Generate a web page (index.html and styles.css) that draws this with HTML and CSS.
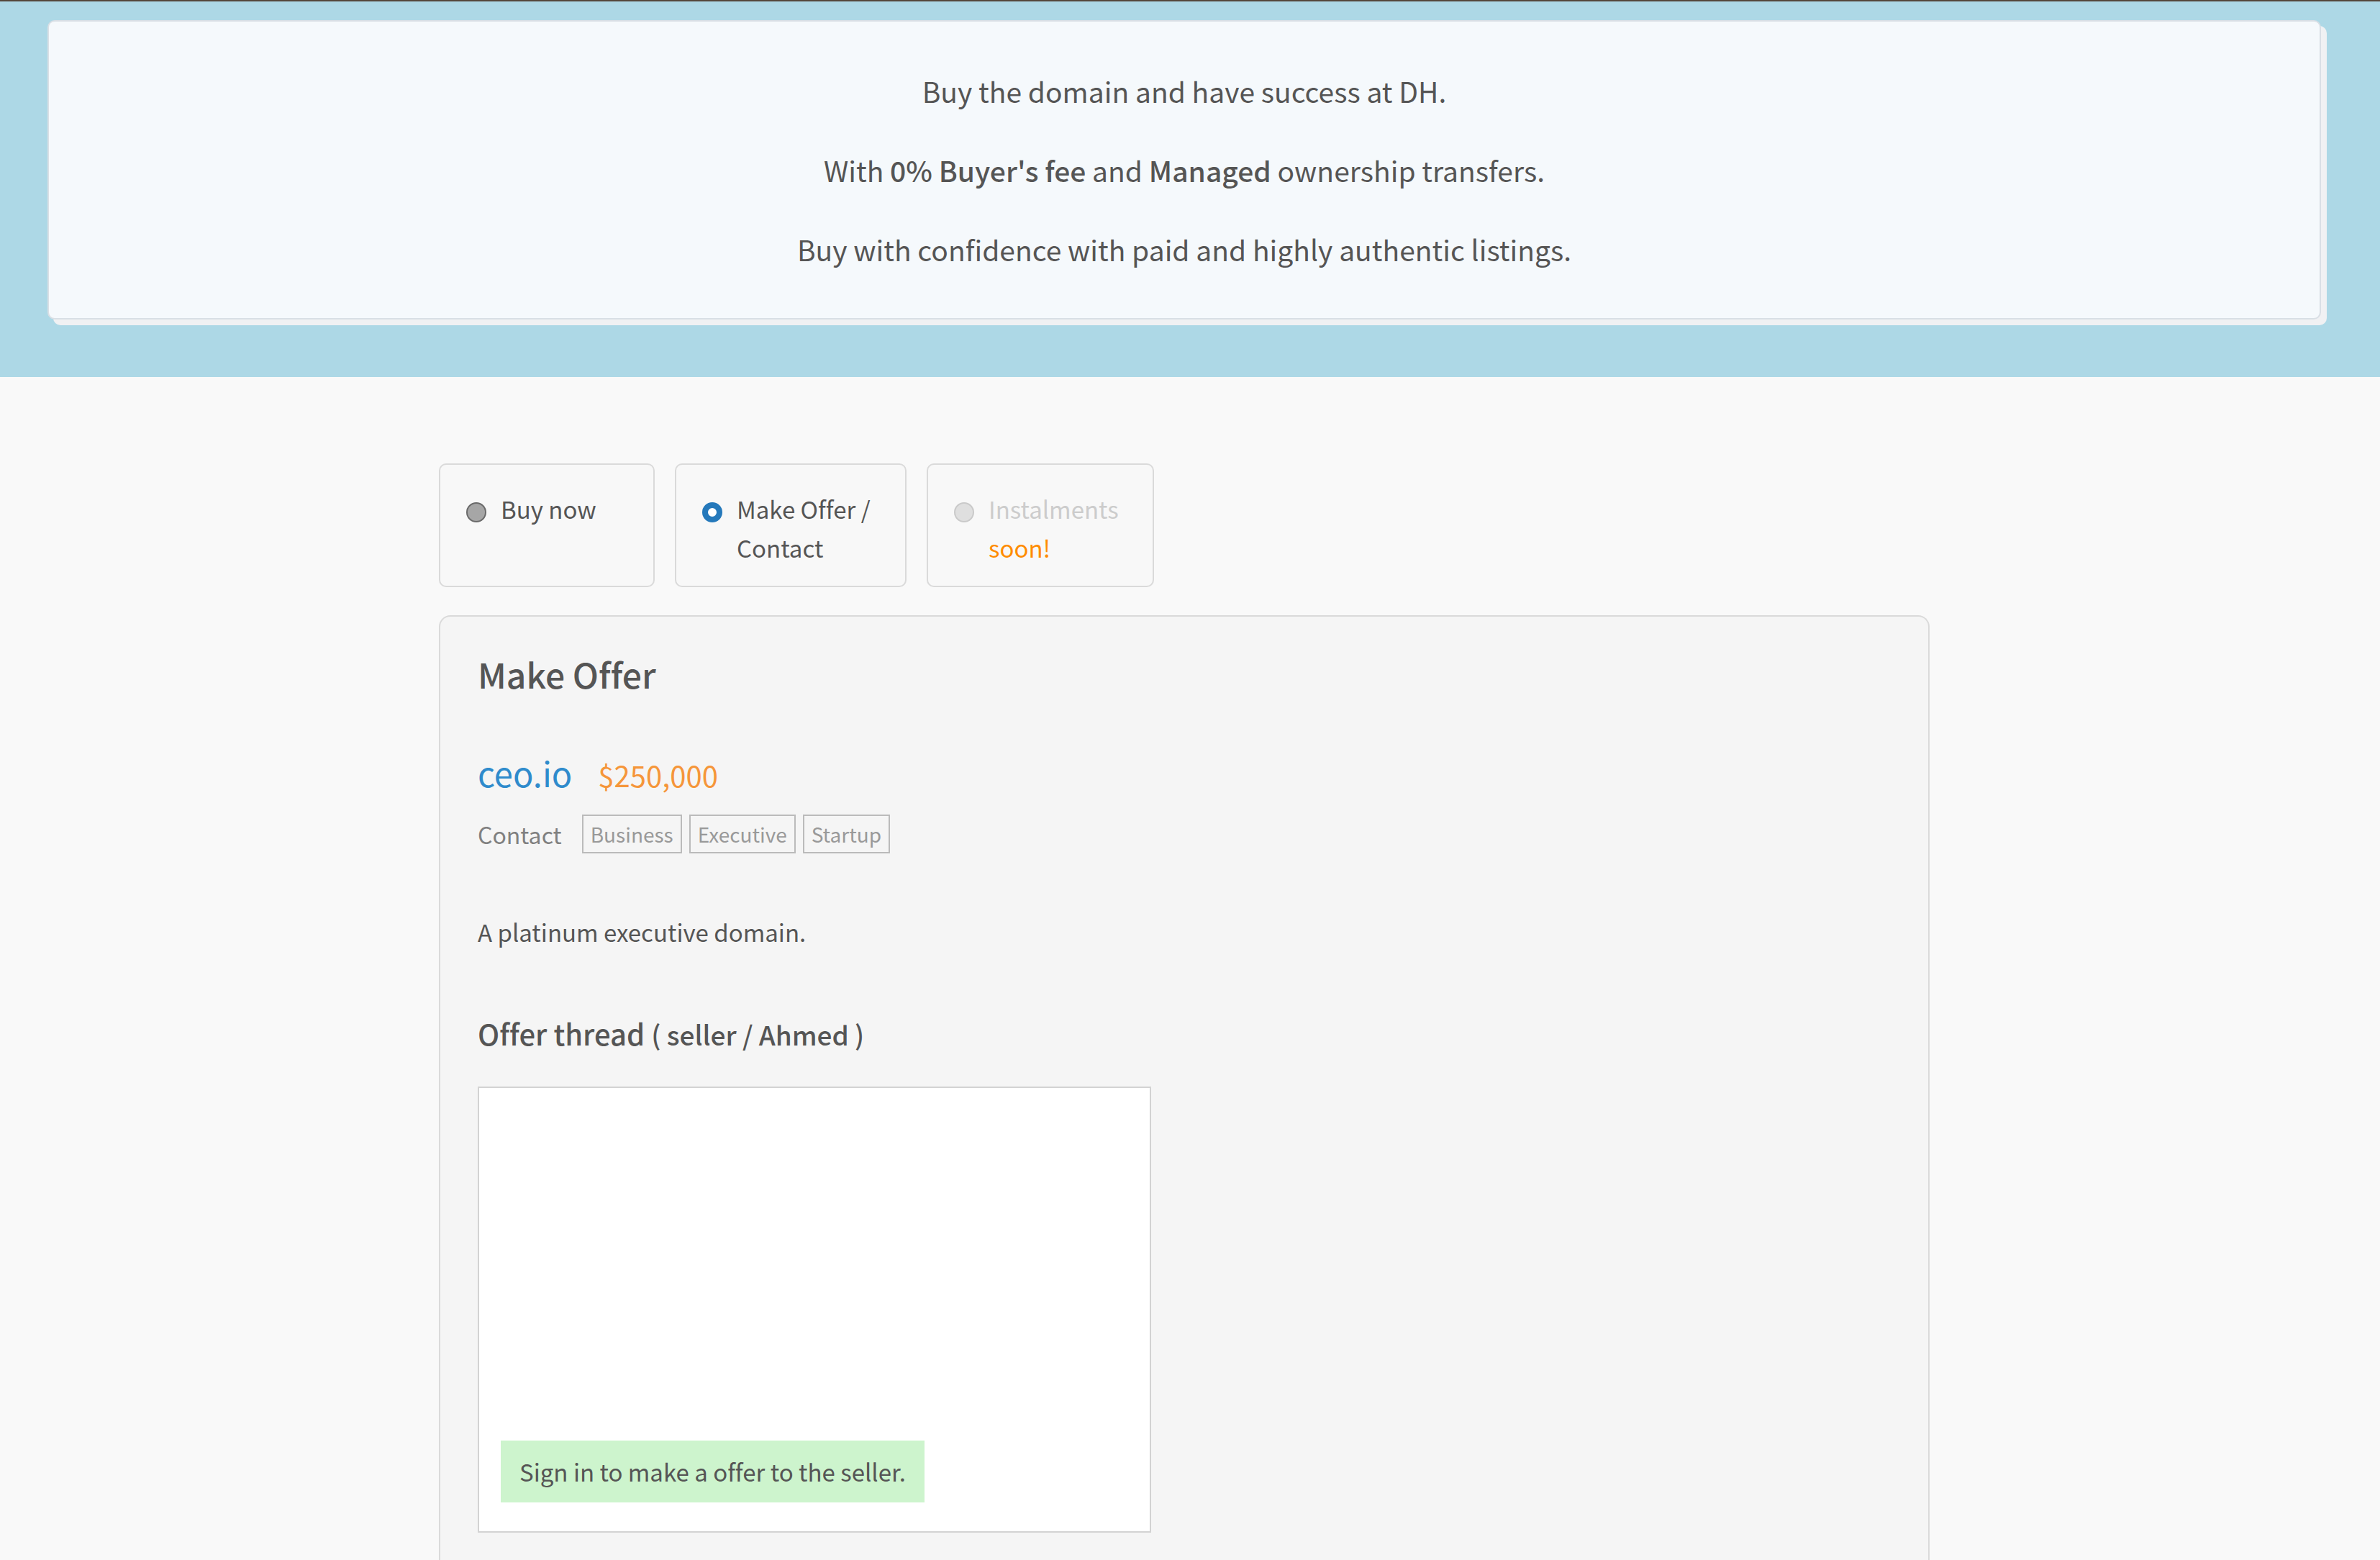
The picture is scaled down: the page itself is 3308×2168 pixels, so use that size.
FILE: index.html
```
<!DOCTYPE html>
<html lang="en">
<head>
    <meta charset="UTF-8">
    <meta name="viewport" content="width=device-width, initial-scale=1.0">
    <title>ceo.io - Make Offer</title>
    <link rel="stylesheet" href="styles.css">
</head>
<body>
    <header class="hero">
        <div class="hero-card">
            <p>Buy the domain and have success at DH.</p>
            <p>With <strong>0% Buyer's fee</strong> and <strong>Managed</strong> ownership transfers.</p>
            <p>Buy with confidence with paid and highly authentic listings.</p>
        </div>
    </header>

    <main class="container">
        <form class="options">
            <label class="option">
                <input type="radio" name="type" value="buy">
                <span>Buy now</span>
            </label>
            <label class="option">
                <input type="radio" name="type" value="offer" checked>
                <span>Make Offer /<br>Contact</span>
            </label>
            <label class="option disabled">
                <input type="radio" name="type" value="instalments" disabled>
                <span>Instalments<br><em class="soon">soon!</em></span>
            </label>
        </form>

        <section class="panel">
            <h1>Make Offer</h1>

            <div class="listing">
                <a class="domain" href="#">ceo.io</a>
                <span class="price">$250,000</span>
            </div>
            <div class="meta">
                <span class="contact">Contact</span>
                <ul class="tags">
                    <li>Business</li>
                    <li>Executive</li>
                    <li>Startup</li>
                </ul>
            </div>

            <p class="description">A platinum executive domain.</p>

            <h2>Offer thread <small>( seller / Ahmed )</small></h2>
            <div class="thread">
                <p class="notice">Sign in to make a offer to the seller.</p>
            </div>
        </section>
    </main>
</body>
</html>
```

FILE: styles.css
```
* {
    box-sizing: border-box;
    margin: 0;
    padding: 0;
}
body {
    font-family: 'Noto Sans CJK SC', 'Noto Sans', sans-serif;
    font-variant-ligatures: none;
    font-size: 33px;
    line-height: 54px;
    color: #555;
    background: #f9f9f9;
}
.hero {
    background: #add8e6;
    border-top: 2px solid #54463a;
    padding: 26px 82px 80px 66px;
}
.hero-card {
    display: flex;
    flex-direction: column;
    gap: 54px;
    background: #f5f9fc;
    border: 2px solid #d9dfe5;
    border-radius: 10px;
    box-shadow: 8px 8px 0 #f0f1f3;
    padding: 68px 40px;
    text-align: center;
    font-size: 39px;
    line-height: 56px;
}
.hero-card strong {
    font-weight: 500;
}
.container {
    max-width: 2088px;
    margin: 0 auto;
    padding: 120px 16px 0 0;
}
.options {
    display: grid;
    grid-template-columns: 300px 322px 316px;
    gap: 28px;
    margin-bottom: 39px;
}
.option {
    display: flex;
    align-items: flex-start;
    gap: 20px;
    background: #f8f8f8;
    border: 2px solid #dadada;
    border-radius: 10px;
    padding: 34px 36px 26px;
    white-space: nowrap;
}
.option input {
    appearance: none;
    width: 28px;
    height: 28px;
    margin-top: 18px;
    flex-shrink: 0;
    border: 2px solid #6b6b6b;
    border-radius: 50%;
    background: #a6a6a6;
}
.option input:checked {
    border: 8px solid #2579bb;
    background: #fff;
}
.option.disabled {
    color: #ccc;
}
.option.disabled input {
    border-color: #cacaca;
    background: #dfdfdf;
}
.soon {
    font-style: normal;
    color: #ff8c00;
}
.panel {
    background: #f5f5f5;
    border: 2px solid #dadada;
    border-bottom: none;
    border-radius: 16px 16px 0 0;
    padding: 48px 52px 80px;
}
h1 {
    font-size: 48px;
    font-weight: 500;
    line-height: 62px;
    margin-bottom: 80px;
}
.listing {
    display: flex;
    align-items: baseline;
    gap: 36px;
    margin-bottom: 28px;
}
.domain {
    color: #2f8bcc;
    font-size: 47px;
    text-decoration: none;
}
.price {
    color: #f5963a;
    font-size: 40px;
}
.meta {
    display: flex;
    align-items: center;
    gap: 28px;
    margin-bottom: 82px;
}
.contact {
    font-size: 32px;
    color: #808080;
}
.tags {
    display: flex;
    gap: 10px;
    list-style: none;
}
.tags li {
    border: 2px solid #bbb;
    color: #999;
    padding: 0 10px;
    font-size: 28px;
    line-height: 50px;
}
.description {
    margin-bottom: 86px;
}
h2 {
    font-size: 40px;
    font-weight: 500;
    line-height: 56px;
    margin-bottom: 45px;
}
h2 small {
    font-size: 37px;
}
.thread {
    display: flex;
    align-items: flex-end;
    width: 936px;
    height: 620px;
    max-width: 100%;
    padding: 0 30px 40px;
    background: #fff;
    border: 2px solid #d3d3d3;
}
.notice {
    background: #cdf4cd;
    padding: 16px 26px;
}
```
